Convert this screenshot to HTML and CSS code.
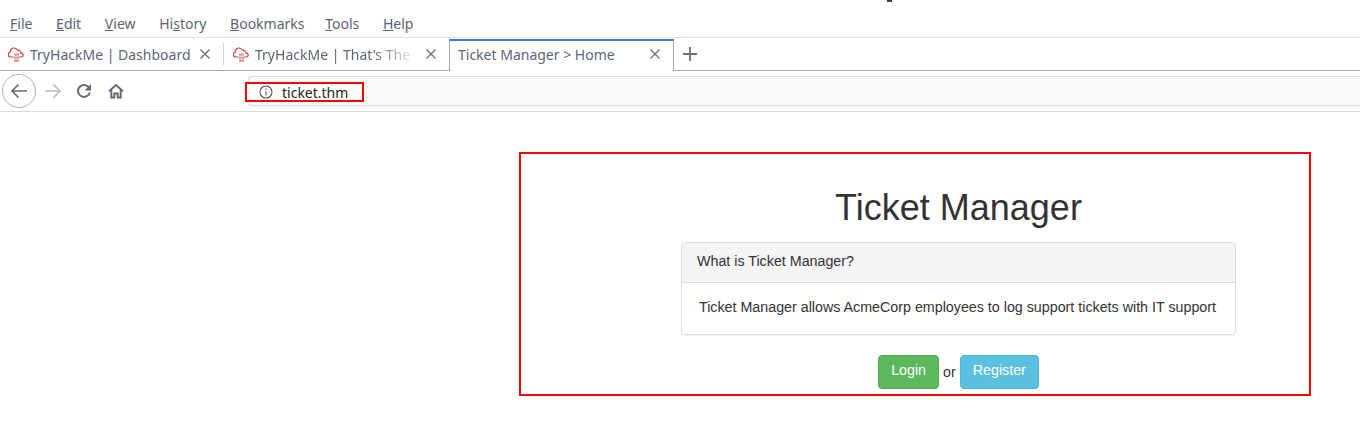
FILE: index.html
```html
<!DOCTYPE html>
<html lang="en">
<head>
<meta charset="utf-8">
<title>Ticket Manager &gt; Home</title>
<link rel="stylesheet" href="styles.css">
</head>
<body>
<div class="titlebar"><span class="title-clip"></span></div>
<nav class="menubar">
  <span class="menu"><u>F</u>ile</span>
  <span class="menu"><u>E</u>dit</span>
  <span class="menu"><u>V</u>iew</span>
  <span class="menu">Hi<u>s</u>tory</span>
  <span class="menu menu-books"><u>B</u>ookmarks</span>
  <span class="menu"><u>T</u>ools</span>
  <span class="menu"><u>H</u>elp</span>
</nav>
<div class="tabbar">
  <div class="tab tab-first">
    <svg class="favicon" viewBox="0 0 16 16"><path d="M5.500 11H3a2.500 2.500 0 0 1-.5-5A3.500 3.500 0 0 1 6 2a3.800 3.800 0 0 1 3.500 2.200A3 3 0 0 1 13 7.200a1.900 1.900 0 0 1 .5 3.800H11" fill="none" stroke="#d9363e" stroke-width="1.200"/><rect x="6" y="7.500" width="5" height="2.200" fill="#b9a9a9"/><rect x="6" y="10.500" width="5" height="2.200" fill="#d99"/><rect x="6" y="13.500" width="5" height="2.200" fill="#e08a8a"/></svg>
    <span class="tab-title">TryHackMe | Dashboard</span>
    <svg class="close" viewBox="0 0 12 12"><path d="M1.500 1.500l9 9M10.500 1.500l-9 9"/></svg>
  </div>
  <div class="tab tab-second">
    <svg class="favicon" viewBox="0 0 16 16"><path d="M5.500 11H3a2.500 2.500 0 0 1-.5-5A3.500 3.500 0 0 1 6 2a3.800 3.800 0 0 1 3.500 2.200A3 3 0 0 1 13 7.200a1.900 1.900 0 0 1 .5 3.800H11" fill="none" stroke="#d9363e" stroke-width="1.200"/><rect x="6" y="7.500" width="5" height="2.200" fill="#b9a9a9"/><rect x="6" y="10.500" width="5" height="2.200" fill="#d99"/><rect x="6" y="13.500" width="5" height="2.200" fill="#e08a8a"/></svg>
    <span class="tab-title tab-fade">TryHackMe | That's The T</span>
    <svg class="close" viewBox="0 0 12 12"><path d="M1.500 1.500l9 9M10.500 1.500l-9 9"/></svg>
  </div>
  <div class="tab tab-active">
    <span class="tab-title">Ticket Manager &gt; Home</span>
    <svg class="close" viewBox="0 0 12 12"><path d="M1.500 1.500l9 9M10.500 1.500l-9 9"/></svg>
  </div>
  <div class="tab-rest">
    <svg class="plus" viewBox="0 0 14 14"><path d="M7 0v14M0 7h14"/></svg>
  </div>
</div>
<div class="toolbar">
  <div class="back"><svg viewBox="0 0 18 18"><path d="M17 9H2M8.500 2.500L2 9l6.500 6.500"/></svg></div>
  <svg class="tool forward" viewBox="0 0 18 18"><path d="M1 9h15M9.500 2.500L16 9l-6.500 6.500"/></svg>
  <svg class="tool reload" viewBox="0 0 16 16"><path d="M13.800 9.500A6 6 0 1 1 12 3.400L14 5.500"/><path class="solid" d="M15 1v6.500H8.500z"/></svg>
  <svg class="tool home" viewBox="0 0 16 16"><path d="M1 8.300l7-6.300 7 6.300"/><path d="M3.300 7v7.500h3V10.500h3.400v4h3V7"/></svg>
  <div class="urlbar">
    <div class="url-mark">
      <svg class="info" viewBox="0 0 14 14"><circle cx="7" cy="7" r="6"/><path d="M7 6.200v4.300M7 3.400v1.500"/></svg>
      <span class="url">ticket.thm</span>
    </div>
  </div>
</div>
<main class="shot">
  <h1>Ticket Manager</h1>
  <section class="panel">
    <div class="panel-head">What is Ticket Manager?</div>
    <div class="panel-body">Ticket Manager allows AcmeCorp employees to log support tickets with IT support</div>
  </section>
  <div class="actions">
    <a class="btn btn-green">Login</a> <span class="or">or</span> <a class="btn btn-blue">Register</a>
  </div>
</main>
</body>
</html>
```
FILE: styles.css
```css
* { box-sizing: border-box; }
html, body { margin: 0; padding: 0; background: #fff; }
body { width: 1360px; height: 435px; overflow: hidden; font-family: "Noto Sans", sans-serif; }

.titlebar { height: 10px; padding-left: 887px; }
.title-clip { display: block; width: 5px; height: 2px; background: #3a3a3a; }

.menubar { height: 28px; border-bottom: 1px solid #e2e2e2; display: flex; padding-left: 10px; gap: 23.7px; font-size: 14px; line-height: 28px; color: #5c6470; }
.menu { display: block; }
.menu-books { margin-right: -3px; }

.tabbar { height: 33px; display: flex; color: #5d6675; font-size: 14px; }
.tab { height: 33px; display: flex; align-items: center; border-bottom: 1px solid #a8a8a8; }
.tab-first { width: 223px; padding-left: 8px; }
.tab-second { width: 226px; padding-left: 10px; position: relative; }
.tab-second::before { content: ""; position: absolute; left: 0; top: 5px; bottom: 5px; width: 1px; background: #d4d4d4; }
.tab-active { width: 225px; height: 32px; margin-top: 1px; padding: 0 0 4px 8px; border: 1px solid #a8a8a8; border-bottom: 0; border-top: 2px solid #3b7ae8; }
.tab-rest { flex: 1; height: 33px; border-bottom: 1px solid #a8a8a8; padding-left: 9px; display: flex; align-items: center; }
.favicon { width: 16px; height: 16px; flex: none; margin-right: 6px; }
.tab-title { white-space: nowrap; flex: 1; min-width: 0; }
.tab-fade { -webkit-mask-image: linear-gradient(to right, #000 74%, rgba(0,0,0,.15) 98%, transparent 100%); mask-image: linear-gradient(to right, #000 74%, rgba(0,0,0,.15) 98%, transparent 100%); }
.close { width: 12px; height: 12px; flex: none; margin: 0 12px 0 10px; fill: none; stroke: #6f737b; stroke-width: 1.4; }
.plus { width: 14px; height: 14px; fill: none; stroke: #6a6f78; stroke-width: 1.8; }

.toolbar { height: 41px; display: flex; align-items: center; border-bottom: 1px solid #dcdcdc; padding-left: 2px; }
.back { width: 34px; height: 34px; border: 1px solid #b4b4b4; border-radius: 50%; display: flex; align-items: center; justify-content: center; flex: none; }
.back svg { width: 18px; height: 18px; fill: none; stroke: #666b74; stroke-width: 1.7; }
.tool { flex: none; fill: none; stroke-width: 2; }
.forward { width: 18px; height: 18px; margin-left: 8px; stroke: #bdbdbd; stroke-width: 1.7; }
.reload { width: 16px; height: 16px; margin-left: 14px; stroke: #666b74; }
.reload .solid { fill: #666b74; stroke: none; }
.home { width: 16px; height: 16px; margin-left: 16px; stroke: #666b74; }
.urlbar { flex: 1; height: 30px; margin-left: 124px; background: #f9f9f9; border: 1px solid #dcdcdc; border-right: 0; border-radius: 4px 0 0 4px; display: flex; align-items: flex-start; }
.url-mark { height: 20px; width: 119px; margin: 5px 0 0 -4px; border: 2px solid #f00; display: flex; align-items: center; padding-left: 12px; background: #fff; position: relative; }
.info { width: 14px; height: 14px; fill: none; stroke: #55585e; stroke-width: 1.1; flex: none; }
.url { margin-left: 9px; font-size: 14px; color: #222; }

.shot { width: 792px; height: 244px; margin: 40px 0 0 519px; border: 2px solid #f00; padding: 0 73px 0 160px; font-family: "Liberation Sans", sans-serif; color: #333; font-size: 14.28px; text-align: center; }
h1 { margin: 34px 0 14px; font-size: 36px; font-weight: 500; line-height: 40px; }
.panel { border: 1px solid #ddd; border-radius: 4px; box-shadow: 0 1px 1px rgba(0,0,0,.05); text-align: left; height: 93px; }
.panel-head { height: 40px; padding: 8px 15px; background: #f5f5f5; border-bottom: 1px solid #ddd; border-radius: 3px 3px 0 0; line-height: 20px; }
.panel-body { padding: 14px 15px 15px 17px; line-height: 20px; white-space: nowrap; }
.actions { margin-top: 20px; display: flex; justify-content: center; align-items: center; gap: 4px; height: 34px; }
.btn { display: block; height: 34px; padding: 4px 12px; border: 1px solid; border-radius: 4px; color: #fff; line-height: 20px; }
.btn-green { background: #5cb85c; border-color: #4cae4c; }
.btn-blue { background: #5bc0de; border-color: #46b8da; }
.or { line-height: 20px; }
```
